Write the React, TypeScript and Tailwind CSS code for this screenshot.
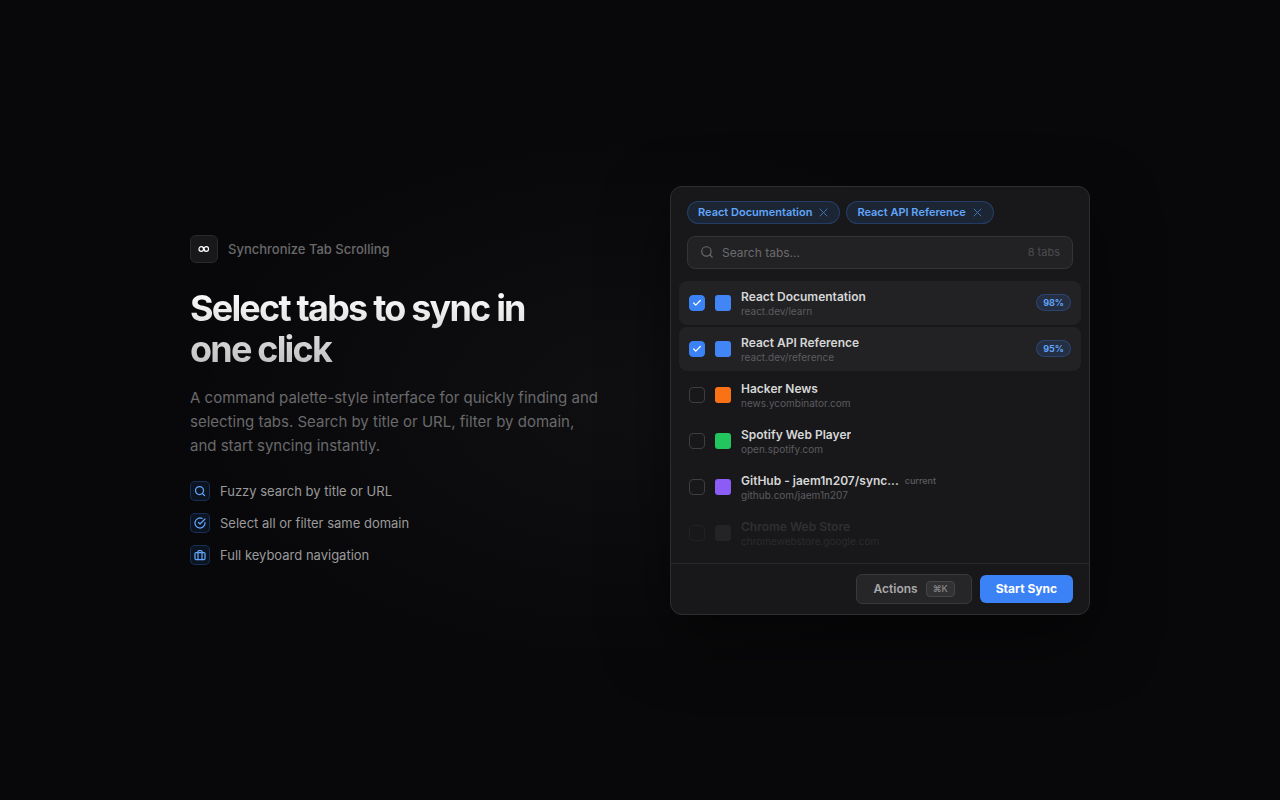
import { useState } from 'react'
import type { ReactNode } from 'react'

interface Tab {
  id: number
  title: string
  url: string
  color: string
  score?: string
  current?: boolean
  disabled?: boolean
}

const TABS: Tab[] = [
  { id: 1, title: 'React Documentation', url: 'react.dev/learn', color: 'bg-[#4285f4]', score: '98%' },
  { id: 2, title: 'React API Reference', url: 'react.dev/reference', color: 'bg-[#4285f4]', score: '95%' },
  { id: 3, title: 'Hacker News', url: 'news.ycombinator.com', color: 'bg-[#f97316]' },
  { id: 4, title: 'Spotify Web Player', url: 'open.spotify.com', color: 'bg-[#22c55e]' },
  { id: 5, title: 'GitHub - jaem1n207/sync...', url: 'github.com/jaem1n207', color: 'bg-[#8b5cf6]', current: true },
  { id: 6, title: 'Chrome Web Store', url: 'chromewebstore.google.com', color: 'bg-[#242426]', disabled: true },
]

function SearchIcon({ className }: { className: string }) {
  return (
    <svg className={className} viewBox="0 0 24 24" fill="none" stroke="currentColor" strokeWidth="2" strokeLinecap="round" strokeLinejoin="round" aria-hidden="true">
      <circle cx="11" cy="11" r="8" />
      <path d="m21 21-4.35-4.35" />
    </svg>
  )
}

function Feature({ icon, children }: { icon: ReactNode; children: ReactNode }) {
  return (
    <li className="flex items-center gap-2.5 text-[13px] leading-5 text-[#9a9a9b]">
      <span className="flex size-5 shrink-0 items-center justify-center rounded-[5px] border border-[#3b82f6]/25 bg-[#3b82f6]/10 text-[#60a5fa]">
        {icon}
      </span>
      {children}
    </li>
  )
}

function TabRow({ tab, checked, onToggle }: { tab: Tab; checked: boolean; onToggle: () => void }) {
  return (
    <li>
      <label className={`flex items-center gap-2.5 rounded-lg px-2.5 py-2 ${checked ? 'bg-[#222224]' : ''}`}>
        <span className="grid size-4 shrink-0">
          <input
            type="checkbox"
            checked={checked}
            disabled={tab.disabled}
            onChange={onToggle}
            className="col-start-1 row-start-1 size-4 appearance-none rounded-sm border border-[#3e3e41] checked:border-[#3b82f6] checked:bg-[#3b82f6] disabled:border-[#212123]"
          />
          {checked && (
            <svg className="pointer-events-none col-start-1 row-start-1 size-2.5 place-self-center text-white" viewBox="0 0 24 24" fill="none" stroke="currentColor" strokeWidth="3" strokeLinecap="round" strokeLinejoin="round" aria-hidden="true">
              <path d="M20 6 9 17l-5-5" />
            </svg>
          )}
        </span>
        <span className={`size-4 shrink-0 rounded-[3px] ${tab.color}`} />
        <span className="min-w-0 flex-1">
          <span
            className={`flex items-center gap-1.5 text-xs leading-4 font-semibold ${tab.disabled ? 'text-[#2f2f31]' : 'text-[#d6d6d7]'}`}
          >
            <span className="truncate">{tab.title}</span>
            {tab.current && <span className="text-[9px] font-medium text-[#5c5c5f]">current</span>}
          </span>
          <span
            className={`block truncate text-[10px] leading-3 ${tab.disabled ? 'text-[#2b2b2d]' : 'text-[#5c5c5f]'}`}
          >
            {tab.url}
          </span>
        </span>
        {tab.score && (
          <span className="rounded-full border border-[#3b82f6]/25 bg-[#3b82f6]/15 px-1.5 text-[9px] leading-[15px] font-bold text-[#60a5fa]">
            {tab.score}
          </span>
        )}
      </label>
    </li>
  )
}

export default function App() {
  const [selected, setSelected] = useState<number[]>([1, 2])
  const [query, setQuery] = useState('')

  const toggle = (id: number) =>
    setSelected((ids) => (ids.includes(id) ? ids.filter((i) => i !== id) : [...ids, id]))

  return (
    <div className="flex min-h-screen items-center justify-center bg-[#08080a] bg-[radial-gradient(ellipse_36%_34%_at_50%_50%,rgba(255,255,255,0.03),transparent)] font-[Inter,sans-serif]">
      <div className="flex w-full max-w-[900px] items-center gap-[68px]">
        {/* Intro */}
        <section className="min-w-0 flex-1">
          <div className="flex items-center gap-2.5">
            <span className="flex size-7 items-center justify-center rounded-md border border-[#29292b] bg-[#18181a] text-white">
              <svg className="size-3.5" viewBox="0 0 28 28" fill="none" stroke="currentColor" strokeWidth="2.4" aria-hidden="true">
                <circle cx="8.5" cy="14" r="4.6" />
                <circle cx="18.5" cy="14" r="4.6" />
                <path d="M11.5 10.5c2 1.5 3 5.5 5 7" />
              </svg>
            </span>
            <span className="text-[13px] leading-5 font-medium text-[#69696b]">Synchronize Tab Scrolling</span>
          </div>

          <h1 className="mt-[25px] bg-linear-to-b from-white to-[#bebebf] bg-clip-text text-4xl leading-[41px] font-bold tracking-tighter text-transparent">
            Select tabs to sync in
            <br />
            one click
          </h1>

          <p className="mt-4 text-[15px] leading-6 text-[#69696b]">
            A command palette-style interface for quickly finding and selecting tabs. Search by title or URL, filter by
            domain, and start syncing instantly.
          </p>

          <ul className="mt-[23px] flex flex-col gap-3">
            <Feature
              icon={
                <svg className="size-3" viewBox="0 0 24 24" fill="none" stroke="currentColor" strokeWidth="2.5" strokeLinecap="round" strokeLinejoin="round" aria-hidden="true">
                  <circle cx="11" cy="11" r="8" />
                  <path d="m21 21-4.35-4.35" />
                </svg>
              }
            >
              Fuzzy search by title or URL
            </Feature>
            <Feature
              icon={
                <svg className="size-3" viewBox="0 0 24 24" fill="none" stroke="currentColor" strokeWidth="2.5" strokeLinecap="round" strokeLinejoin="round" aria-hidden="true">
                  <path d="M22 11.08V12a10 10 0 1 1-5.93-9.14" />
                  <path d="M22 4 12 14.01l-3-3" />
                </svg>
              }
            >
              Select all or filter same domain
            </Feature>
            <Feature
              icon={
                <svg className="size-3" viewBox="0 0 24 24" fill="none" stroke="currentColor" strokeWidth="2.5" strokeLinecap="round" strokeLinejoin="round" aria-hidden="true">
                  <rect x="2" y="7" width="20" height="14" rx="2" />
                  <path d="M16 21V5a2 2 0 0 0-2-2h-4a2 2 0 0 0-2 2v16" />
                </svg>
              }
            >
              Full keyboard navigation
            </Feature>
          </ul>
        </section>

        {/* Command palette */}
        <section className="w-[420px] shrink-0 rounded-xl border border-[#2e2e30] bg-[#18181a] shadow-[0_24px_64px_rgba(0,0,0,0.5)]">
          <div className="flex flex-col gap-3 px-4 pt-3.5 pb-3">
            <div className="flex gap-1.5">
              {TABS.filter((tab) => selected.includes(tab.id)).map((tab) => (
                <span
                  key={tab.id}
                  className="flex items-center gap-1.5 rounded-full border border-[#3b82f6]/25 bg-[#3b82f6]/12 px-2.5 text-[11px] leading-[21px] font-semibold text-[#60a5fa]"
                >
                  {tab.title}
                  <button type="button" aria-label={`Remove ${tab.title}`} onClick={() => toggle(tab.id)} className="opacity-60">
                    <svg className="size-[11px]" viewBox="0 0 11 11" fill="none" stroke="currentColor" strokeLinecap="round" aria-hidden="true">
                      <path d="m2 2 7 7M9 2 2 9" />
                    </svg>
                  </button>
                </span>
              ))}
            </div>
            <div className="flex items-center gap-2 rounded-lg border border-[#343437] bg-[#222224] px-3 py-[7px]">
              <SearchIcon className="size-3.5 shrink-0 text-[#6b6b6e]" />
              <input
                type="text"
                aria-label="Search tabs"
                placeholder="Search tabs..."
                value={query}
                onChange={(e) => setQuery(e.target.value)}
                className="h-[17px] min-w-0 flex-1 bg-transparent text-xs text-white outline-none placeholder:text-[#6b6b6e]"
              />
              <span className="text-[11px] leading-4 text-[#4c4c4f]">8 tabs</span>
            </div>
          </div>

          <ul className="flex flex-col gap-0.5 px-2 pb-2">
            {TABS.filter((tab) => tab.title.toLowerCase().includes(query.toLowerCase())).map((tab) => (
              <TabRow key={tab.id} tab={tab} checked={selected.includes(tab.id)} onToggle={() => toggle(tab.id)} />
            ))}
          </ul>

          <footer className="flex items-center justify-end gap-2 border-t border-[#29292b] px-4 py-2.5">
            <button type="button" className="flex items-center gap-2 rounded-md border border-[#39393b] bg-[#262628] px-4 py-1.5 text-xs leading-4 font-semibold text-[#a9a9ab]">
              Actions
              <kbd className="rounded-sm border border-[#464648] bg-[#323234] px-1.5 font-[Inter,sans-serif] text-[9px] leading-3.5 font-medium text-[#8a8a8c]">
                ⌘K
              </kbd>
            </button>
            <button type="button" className="rounded-md bg-[#3b82f6] px-4 py-1.5 text-xs leading-4 font-bold text-white">
              Start Sync
            </button>
          </footer>
        </section>
      </div>
    </div>
  )
}
